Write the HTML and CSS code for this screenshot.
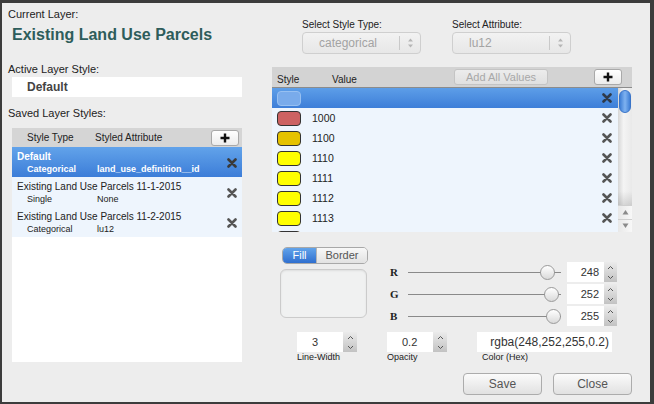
FILE: index.html
```html
<!DOCTYPE html>
<html>
<head>
<meta charset="utf-8">
<link rel="stylesheet" href="styles.css">
</head>
<body>
<div class="window">
  <div class="left">
    <div class="lbl">Current Layer:</div>
    <div class="title">Existing Land Use Parcels</div>
    <div class="lbl lbl-active">Active Layer Style:</div>
    <div class="active-box">Default</div>
    <div class="lbl lbl-saved">Saved Layer Styles:</div>
    <div class="styles-table">
      <div class="st-head">
        <span class="hc1">Style Type</span><span>Styled Attribute</span>
        <button class="plus-btn"><svg width="10" height="10" viewBox="0 0 10 10"><path d="M5 0.5V9.5M0.5 5H9.5" stroke="#111" stroke-width="2.4"/></svg></button>
      </div>
      <div class="st-row selected">
        <div class="st-text"><div class="name">Default</div><div class="sub"><span class="sc1">Categorical</span><span>land_use_definition__id</span></div></div>
        <svg class="x" width="10" height="10" viewBox="0 0 10 10"><path d="M1.5 1.5L8.5 8.5M8.5 1.5L1.5 8.5" stroke="#3a3a3a" stroke-width="2.6" stroke-linecap="round"/></svg>
      </div>
      <div class="st-row">
        <div class="st-text"><div class="name">Existing Land Use Parcels 11-1-2015</div><div class="sub"><span class="sc1">Single</span><span>None</span></div></div>
        <svg class="x" width="10" height="10" viewBox="0 0 10 10"><path d="M1.5 1.5L8.5 8.5M8.5 1.5L1.5 8.5" stroke="#555" stroke-width="2.6" stroke-linecap="round"/></svg>
      </div>
      <div class="st-row">
        <div class="st-text"><div class="name">Existing Land Use Parcels 11-2-2015</div><div class="sub"><span class="sc1">Categorical</span><span>lu12</span></div></div>
        <svg class="x" width="10" height="10" viewBox="0 0 10 10"><path d="M1.5 1.5L8.5 8.5M8.5 1.5L1.5 8.5" stroke="#555" stroke-width="2.6" stroke-linecap="round"/></svg>
      </div>
    </div>
  </div>

  <div class="right">
    <div class="selects">
      <div class="sel-group">
        <div class="sel-lbl">Select Style Type:</div>
        <div class="select"><span class="val">categorical</span><span class="sep"></span><span class="arrows"><svg width="7" height="12" viewBox="0 0 7 12"><path d="M3.5 1.5L6 4.5H1Z M3.5 10.5L6 7.5H1Z" fill="#b5b5b5"/></svg></span></div>
      </div>
      <div class="sel-group">
        <div class="sel-lbl">Select Attribute:</div>
        <div class="select"><span class="val">lu12</span><span class="sep"></span><span class="arrows"><svg width="7" height="12" viewBox="0 0 7 12"><path d="M3.5 1.5L6 4.5H1Z M3.5 10.5L6 7.5H1Z" fill="#b5b5b5"/></svg></span></div>
      </div>
    </div>

    <div class="values">
      <div class="v-head">
        <span class="vh1">Style</span><span class="vh2">Value</span>
        <button class="add-all">Add All Values</button>
        <button class="plus-btn v-plus"><svg width="10" height="10" viewBox="0 0 10 10"><path d="M5 0.5V9.5M0.5 5H9.5" stroke="#111" stroke-width="2.4"/></svg></button>
      </div>
      <div class="v-body">
        <div class="v-list">
          <div class="v-row selected"><span class="swatch sw-sel"></span><span class="v-val"></span><svg class="x" width="10" height="10" viewBox="0 0 10 10"><path d="M1.5 1.5L8.5 8.5M8.5 1.5L1.5 8.5" stroke="#2f3a4a" stroke-width="2.6" stroke-linecap="round"/></svg></div>
          <div class="v-row"><span class="swatch sw-red"></span><span class="v-val">1000</span><svg class="x" width="10" height="10" viewBox="0 0 10 10"><path d="M1.5 1.5L8.5 8.5M8.5 1.5L1.5 8.5" stroke="#555" stroke-width="2.6" stroke-linecap="round"/></svg></div>
          <div class="v-row"><span class="swatch sw-gold"></span><span class="v-val">1100</span><svg class="x" width="10" height="10" viewBox="0 0 10 10"><path d="M1.5 1.5L8.5 8.5M8.5 1.5L1.5 8.5" stroke="#555" stroke-width="2.6" stroke-linecap="round"/></svg></div>
          <div class="v-row"><span class="swatch sw-yellow"></span><span class="v-val">1110</span><svg class="x" width="10" height="10" viewBox="0 0 10 10"><path d="M1.5 1.5L8.5 8.5M8.5 1.5L1.5 8.5" stroke="#555" stroke-width="2.6" stroke-linecap="round"/></svg></div>
          <div class="v-row"><span class="swatch sw-yellow"></span><span class="v-val">1111</span><svg class="x" width="10" height="10" viewBox="0 0 10 10"><path d="M1.5 1.5L8.5 8.5M8.5 1.5L1.5 8.5" stroke="#555" stroke-width="2.6" stroke-linecap="round"/></svg></div>
          <div class="v-row"><span class="swatch sw-yellow"></span><span class="v-val">1112</span><svg class="x" width="10" height="10" viewBox="0 0 10 10"><path d="M1.5 1.5L8.5 8.5M8.5 1.5L1.5 8.5" stroke="#555" stroke-width="2.6" stroke-linecap="round"/></svg></div>
          <div class="v-row"><span class="swatch sw-yellow"></span><span class="v-val">1113</span><svg class="x" width="10" height="10" viewBox="0 0 10 10"><path d="M1.5 1.5L8.5 8.5M8.5 1.5L1.5 8.5" stroke="#555" stroke-width="2.6" stroke-linecap="round"/></svg></div>
          <div class="v-row"><span class="swatch sw-orange"></span><span class="v-val"></span></div>
        </div>
        <div class="scrollbar">
          <div class="thumb-v"></div>
          <div class="sb-space"></div>
          <div class="sb-arrow"><svg width="7" height="6" viewBox="0 0 7 6"><path d="M3.5 1L6.5 5.5H0.5Z" fill="#8a8a8a"/></svg></div>
          <div class="sb-arrow"><svg width="7" height="6" viewBox="0 0 7 6"><path d="M3.5 5L6.5 0.5H0.5Z" fill="#8a8a8a"/></svg></div>
        </div>
      </div>
    </div>

    <div class="editor">
      <div class="ed-top">
        <div class="ed-left">
          <div class="toggle"><span class="t-on">Fill</span><span class="t-off">Border</span></div>
          <div class="preview"></div>
        </div>
        <div class="rgb">
          <div class="rgb-row">
            <span class="rgb-lbl">R</span>
            <div class="track"><span class="thumb" style="left:132px"></span></div>
            <div class="num"><span class="txt">248</span><span class="stepper"><svg width="7" height="5" viewBox="0 0 7 5"><path d="M1 4L3.5 1.5L6 4" stroke="#555" fill="none"/></svg><svg width="7" height="5" viewBox="0 0 7 5"><path d="M1 1L3.5 3.5L6 1" stroke="#555" fill="none"/></svg></span></div>
          </div>
          <div class="rgb-row">
            <span class="rgb-lbl">G</span>
            <div class="track"><span class="thumb" style="left:136px"></span></div>
            <div class="num"><span class="txt">252</span><span class="stepper"><svg width="7" height="5" viewBox="0 0 7 5"><path d="M1 4L3.5 1.5L6 4" stroke="#555" fill="none"/></svg><svg width="7" height="5" viewBox="0 0 7 5"><path d="M1 1L3.5 3.5L6 1" stroke="#555" fill="none"/></svg></span></div>
          </div>
          <div class="rgb-row">
            <span class="rgb-lbl">B</span>
            <div class="track"><span class="thumb" style="left:138px"></span></div>
            <div class="num"><span class="txt">255</span><span class="stepper"><svg width="7" height="5" viewBox="0 0 7 5"><path d="M1 4L3.5 1.5L6 4" stroke="#555" fill="none"/></svg><svg width="7" height="5" viewBox="0 0 7 5"><path d="M1 1L3.5 3.5L6 1" stroke="#555" fill="none"/></svg></span></div>
          </div>
        </div>
      </div>
      <div class="ed-bottom">
        <div class="field">
          <div class="in"><span class="txt">3</span><span class="stepper"><svg width="7" height="5" viewBox="0 0 7 5"><path d="M1 4L3.5 1.5L6 4" stroke="#555" fill="none"/></svg><svg width="7" height="5" viewBox="0 0 7 5"><path d="M1 1L3.5 3.5L6 1" stroke="#555" fill="none"/></svg></span></div>
          <div class="flabel">Line-Width</div>
        </div>
        <div class="field">
          <div class="in"><span class="txt">0.2</span><span class="stepper"><svg width="7" height="5" viewBox="0 0 7 5"><path d="M1 4L3.5 1.5L6 4" stroke="#555" fill="none"/></svg><svg width="7" height="5" viewBox="0 0 7 5"><path d="M1 1L3.5 3.5L6 1" stroke="#555" fill="none"/></svg></span></div>
          <div class="flabel">Opacity</div>
        </div>
        <div class="field color-field">
          <div class="in color-in"><span class="txt">rgba(248,252,255,0.2)</span></div>
          <div class="flabel">Color (Hex)</div>
        </div>
      </div>
    </div>

    <div class="buttons">
      <button class="btn">Save</button>
      <button class="btn">Close</button>
    </div>
  </div>
</div>
</body>
</html>
```

FILE: styles.css
```css
* { box-sizing: border-box; }

body {
  margin: 0;
  width: 654px;
  height: 404px;
  overflow: hidden;
  background: #3c3c3c;
  font-family: "Liberation Sans", Arial, sans-serif;
  color: #222;
}

button {
  font-family: inherit;
  padding: 0;
  margin: 0;
}

.window {
  margin: 3px 0 0 2px;
  width: 648px;
  height: 399px;
  background: #ededed;
  display: flex;
}

/* ---------- left column ---------- */
.left {
  width: 240px;
  padding: 4px 0 0 6px;
  display: flex;
  flex-direction: column;
}

.lbl {
  font-size: 11px;
  line-height: 14px;
  height: 14px;
}

.title {
  margin: 4px 0 0 4px;
  font-size: 16px;
  line-height: 20px;
  font-weight: bold;
  color: #2e5d5b;
}

.lbl-active { margin-top: 17px; }

.active-box {
  margin: 1px 0 0 4px;
  height: 20px;
  background: #fff;
  padding-left: 15px;
  font-size: 12px;
  line-height: 20px;
  font-weight: bold;
  color: #444;
}

.lbl-saved { margin-top: 9px; }

.styles-table {
  margin: 8px 0 0 4px;
  height: 234px;
  background: #fff;
}

.st-head {
  height: 19px;
  background: #d5d5d5;
  display: flex;
  align-items: center;
  padding-left: 15px;
  font-size: 10px;
  color: #222;
}

.hc1 { width: 68px; }

.plus-btn {
  margin-left: auto;
  margin-right: 3px;
  width: 28px;
  height: 16px;
  border: 1px solid #a9a9a9;
  border-radius: 3px;
  background: linear-gradient(#ffffff, #ececec);
  display: flex;
  align-items: center;
  justify-content: center;
}

.st-row {
  height: 30px;
  display: flex;
  align-items: flex-start;
  padding: 4px 5px 0 5px;
  background: #eef5fd;
  color: #222;
}

.st-row.selected {
  background: linear-gradient(#62a3ea, #3c7dd8);
  color: #fff;
  font-weight: bold;
}

.st-text { flex: 1; }

.name {
  font-size: 10px;
  line-height: 12px;
}

.sub {
  font-size: 9px;
  line-height: 12px;
  padding-left: 10px;
  display: flex;
}

.sc1 { width: 70px; }

.st-row .x {
  align-self: center;
  margin-top: -3px;
}

/* ---------- right column ---------- */
.right {
  margin-left: 30px;
  width: 360px;
  padding-top: 16px;
  display: flex;
  flex-direction: column;
}

.selects {
  display: flex;
  gap: 31px;
  margin-left: 30px;
}

.sel-group { width: 119px; }

.sel-lbl {
  font-size: 10px;
  line-height: 12px;
  color: #222;
}

.select {
  margin-top: 1px;
  height: 22px;
  border: 1px solid #cfcfcf;
  border-radius: 4px;
  background: linear-gradient(#f2f2f2, #e7e7e7);
  display: flex;
  align-items: center;
  font-size: 12px;
  color: #a3a3a3;
}

.select .val {
  width: 96px;
  padding-left: 16px;
}

.select .sep {
  width: 1px;
  height: 14px;
  background: #c9c9c9;
}

.select .arrows {
  flex: 1;
  display: flex;
  justify-content: center;
}

.values { margin-top: 13px; }

.v-head {
  height: 21px;
  background: #d3d3d3;
  border-bottom: 1px solid #8c8c8c;
  display: flex;
  align-items: center;
  padding-left: 5px;
  font-size: 10px;
  color: #222;
}

.vh1, .vh2 { padding-top: 4px; }
.vh1 { width: 55px; }

.add-all {
  margin-left: auto;
  margin-right: 46px;
  width: 94px;
  height: 16px;
  border: 1px solid #c4c4c4;
  border-radius: 3px;
  background: linear-gradient(#ececec, #e0e0e0);
  font-size: 11px;
  color: #a8a8a8;
}

.v-plus {
  margin-left: 0;
  margin-right: 10px;
}

.v-body {
  display: flex;
  height: 144px;
}

.v-list {
  flex: 1;
  background: #eef5fd;
  overflow: hidden;
}

.v-row {
  height: 20px;
  display: flex;
  align-items: center;
  padding: 0 6px 0 5px;
  font-size: 10.5px;
  color: #222;
}

.v-row.selected {
  background: linear-gradient(#5d9ee8, #3d7ed8);
}

.swatch {
  width: 24px;
  height: 15px;
  border-radius: 4px;
  border: 1px solid #333;
  flex: none;
}

.sw-sel { background: #79abeb; border-color: #97c0f1; }
.sw-red { background: #cd6262; }
.sw-gold { background: #e5c200; }
.sw-yellow { background: #ffff00; }
.sw-orange { background: #ff9f00; }

.v-val { margin-left: 11px; }

.v-row .x { margin-left: auto; }

.scrollbar {
  width: 14px;
  display: flex;
  flex-direction: column;
  background: linear-gradient(to right, #d6d6d6, #f4f4f4 40%, #e9e9e9);
}

.thumb-v {
  margin: 2px 1px 0 1px;
  height: 23px;
  border-radius: 6px;
  border: 1px solid #3a74c8;
  background: linear-gradient(to right, #3f7fd6, #7fb2f0 50%, #3f7fd6);
}

.sb-space {
  flex: 1;
  background: linear-gradient(rgba(0,0,0,0) 85%, rgba(0,0,0,0.12));
}

.sb-arrow {
  height: 13.5px;
  display: flex;
  align-items: center;
  justify-content: center;
  border-top: 1px solid #cfcfcf;
  background: linear-gradient(to right, #e8e8e8, #f8f8f8);
}

/* ---------- editor ---------- */
.editor {
  margin-top: 15px;
  padding-left: 8px;
}

.ed-top { display: flex; }

.ed-left { width: 88px; }

.toggle {
  margin-left: 2px;
  width: 86px;
  height: 17px;
  display: flex;
  border: 1px solid #a8a8a8;
  border-radius: 5px;
  overflow: hidden;
  font-size: 11px;
  line-height: 15px;
}

.t-on {
  width: 33px;
  text-align: center;
  color: #fff;
  background: linear-gradient(#62a3ea, #2f6fcf);
}

.t-off {
  flex: 1;
  text-align: center;
  color: #555;
  border-left: 1px solid #b5b5b5;
  background: linear-gradient(#f8f8f8, #e2e2e2);
}

.preview {
  margin-top: 5px;
  width: 87px;
  height: 49px;
  border: 1px solid #cbcbcb;
  border-radius: 6px;
  background: #f0f1f1;
  box-shadow: inset 0 1px 2px rgba(0,0,0,0.08);
}

.rgb {
  margin: 15px 0 0 22px;
  display: flex;
  flex-direction: column;
  gap: 2px;
}

.rgb-row {
  display: flex;
  align-items: center;
  height: 20px;
}

.rgb-lbl {
  width: 18px;
  font-family: "Liberation Serif", "Times New Roman", serif;
  font-weight: bold;
  font-size: 11px;
}

.track {
  position: relative;
  width: 153px;
  height: 1px;
  background: #8a8a8a;
}

.thumb {
  position: absolute;
  top: -7px;
  width: 15px;
  height: 15px;
  border-radius: 50%;
  border: 1px solid #9a9a9a;
  background: linear-gradient(#ffffff, #dadada);
}

.num {
  margin-left: 6px;
  width: 50px;
  height: 20px;
  display: flex;
  background: #fff;
}

.num .txt {
  flex: 1;
  text-align: right;
  padding-right: 5px;
  font-size: 11px;
  line-height: 20px;
  color: #333;
}

.stepper {
  width: 13px;
  display: flex;
  flex-direction: column;
  align-items: center;
  justify-content: space-around;
  background: linear-gradient(#ebebeb, #c2c2c2);
}

.ed-bottom {
  display: flex;
  margin-top: 6px;
  padding-left: 17px;
}

.field {
  display: flex;
  flex-direction: column;
}

.field + .field { margin-left: 30px; }

.in {
  width: 60px;
  height: 20px;
  display: flex;
  background: #fff;
}

.in .txt {
  flex: 1;
  padding-left: 15px;
  font-size: 11px;
  line-height: 20px;
  color: #333;
}

.in .stepper { width: 14px; }

.color-in { width: 135px; }

.color-in .txt {
  padding-left: 0;
  padding-right: 3px;
  text-align: right;
  font-size: 12px;
}

.flabel {
  font-size: 9px;
  line-height: 11px;
  color: #222;
}

.color-field .flabel { padding-left: 5px; }

.buttons {
  display: flex;
  justify-content: flex-end;
  gap: 11px;
  margin-top: 10px;
}

.btn {
  width: 79px;
  height: 22px;
  border: 1px solid #acacac;
  border-radius: 4px;
  background: linear-gradient(#fbfbfb, #e1e1e1);
  font-size: 12px;
  color: #555;
}
```
